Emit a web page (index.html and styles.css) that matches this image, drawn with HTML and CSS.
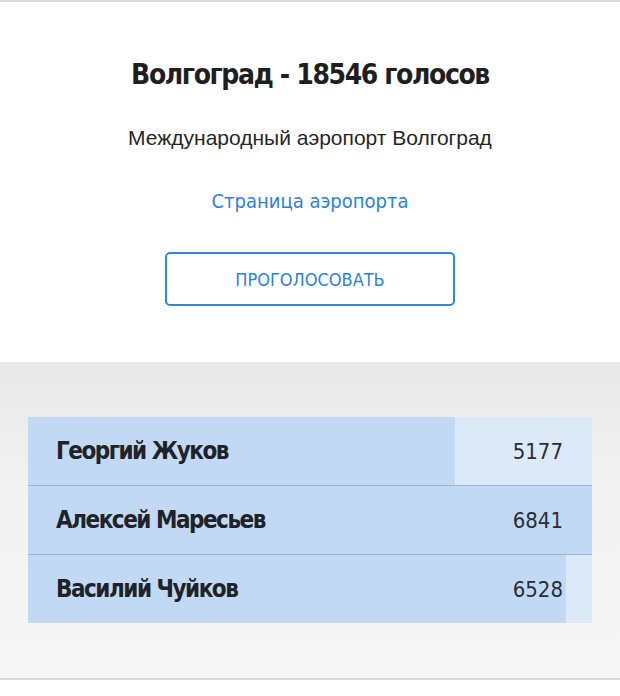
FILE: index.html
```html
<!DOCTYPE html>
<html lang="ru">
<head>
<meta charset="utf-8">
<title>Волгоград</title>
<link rel="stylesheet" href="styles.css">
</head>
<body>
<section class="card">
  <h1 class="title">Волгоград - 18546 голосов</h1>
  <p class="subtitle">Международный аэропорт Волгоград</p>
  <a class="link" href="#">Страница аэропорта</a>
  <button class="vote" type="button">ПРОГОЛОСОВАТЬ</button>
</section>
<section class="results">
  <div class="table">
    <div class="row" style="--pct: 75.68%"><span class="name">Георгий Жуков</span><span class="count">5177</span></div>
    <div class="row" style="--pct: 100%"><span class="name">Алексей Маресьев</span><span class="count">6841</span></div>
    <div class="row" style="--pct: 95.42%"><span class="name">Василий Чуйков</span><span class="count">6528</span></div>
  </div>
</section>
<div class="footer"></div>
</body>
</html>
```
FILE: styles.css
```css
html, body {
  margin: 0;
  padding: 0;
  background: #ffffff;
}
body {
  width: 620px;
  height: 696px;
  overflow: hidden;
  font-family: "DejaVu Sans Condensed", "Liberation Sans Narrow", sans-serif;
  color: #222222;
}
.card {
  border-top: 2px solid #d9d9d9;
  height: 362px;
  box-sizing: border-box;
  display: flex;
  flex-direction: column;
  align-items: center;
  padding-top: 53px;
}
.title {
  margin: 0;
  font-size: 28px;
  line-height: 40px;
  letter-spacing: -1.4px;
  font-weight: 700;
  color: #1f1f1f;
}
.subtitle {
  margin: 30px 0 0;
  font-family: "Liberation Sans", "Roboto", sans-serif;
  font-size: 21px;
  line-height: 26px;
  color: #262626;
}
.link {
  margin-top: 36px;
  font-size: 20px;
  line-height: 28px;
  color: #2b82d9;
  text-decoration: none;
}
.vote {
  margin-top: 37px;
  width: 290px;
  height: 54px;
  border: 2px solid #3385d8;
  border-radius: 5px;
  background: #ffffff;
  color: #2b82d9;
  font-family: inherit;
  font-size: 18px;
  cursor: pointer;
}
.results {
  height: 318px;
  box-sizing: border-box;
  padding: 55px 28px;
  background: linear-gradient(to bottom, #e8e8e8 0%, #f2f2f2 40%, #f6f6f6 100%);
  border-bottom: 2px solid #d8d8d8;
}
.table {
  display: flex;
  flex-direction: column;
}
.row {
  height: 68px;
  display: flex;
  align-items: center;
  justify-content: space-between;
  padding: 0 29px 0 28px;
  background: linear-gradient(to right, #c1d9f5 var(--pct), #dce9f8 var(--pct));
}
.row + .row {
  border-top: 1px solid #96b6da;
}
.name {
  font-size: 24px;
  letter-spacing: -1.5px;
  font-weight: 700;
  color: #1f2328;
}
.count {
  font-size: 22px;
  color: #2a2d33;
}
.footer {
  height: 16px;
  background: #ffffff;
}
```
